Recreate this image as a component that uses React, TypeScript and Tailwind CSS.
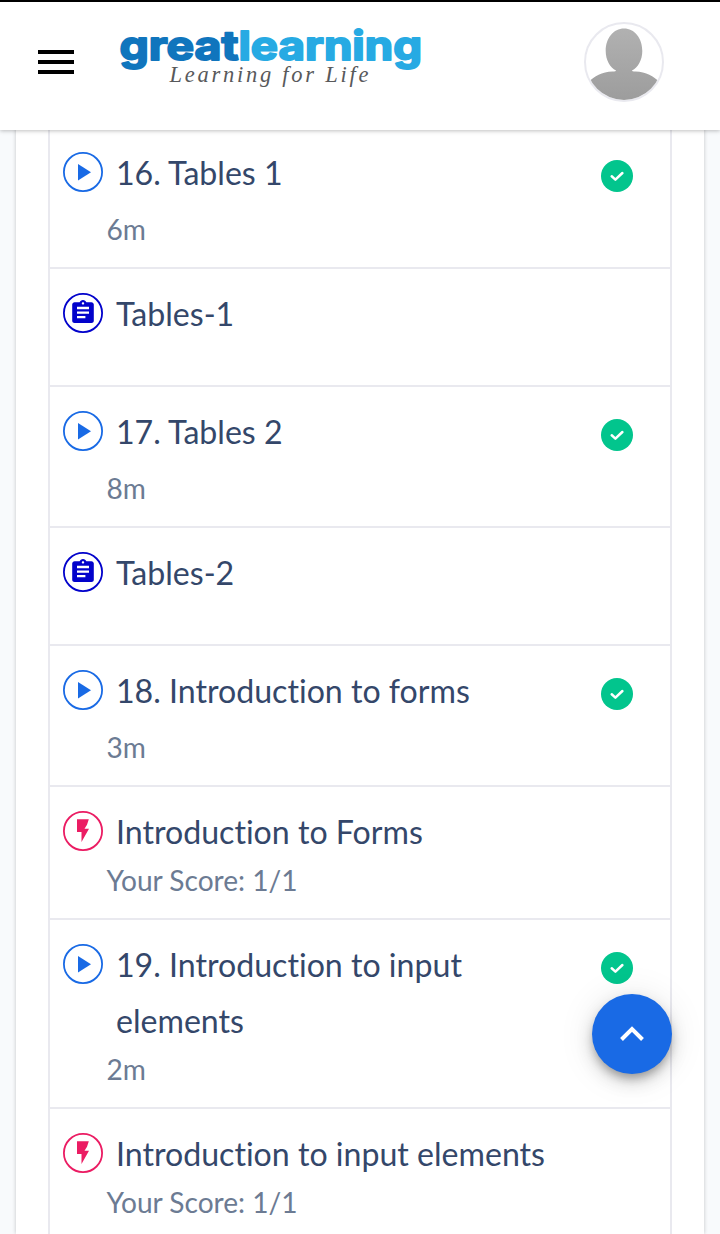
import React from "react";

type Kind = "video" | "quiz" | "exercise";

interface Lesson {
  kind: Kind;
  title: string;
  note?: string;
  done?: boolean;
  height: string;
  noteClass?: string;
}

const lessons: Lesson[] = [
  { kind: "video", title: "16. Tables 1", note: "6m", done: true, height: "h-[141px]", noteClass: "mt-2" },
  { kind: "exercise", title: "Tables-1", height: "h-[118px]" },
  { kind: "video", title: "17. Tables 2", note: "8m", done: true, height: "h-[141px]", noteClass: "mt-2" },
  { kind: "exercise", title: "Tables-2", height: "h-[118px]" },
  { kind: "video", title: "18. Introduction to forms", note: "3m", done: true, height: "h-[141px]", noteClass: "mt-2" },
  { kind: "quiz", title: "Introduction to Forms", note: "Your Score: 1/1", height: "h-[133px]" },
  { kind: "video", title: "19. Introduction to input elements", note: "2m", done: true, height: "h-[189px]" },
  { kind: "quiz", title: "Introduction to input elements", note: "Your Score: 1/1", height: "h-[133px]" },
];

function KindIcon({ kind }: { kind: Kind }) {
  if (kind === "video") {
    return (
      <svg viewBox="0 0 40 40" className="mt-6 size-10 shrink-0">
        <circle cx="20" cy="20" r="19.1" fill="none" stroke="#196ae5" strokeWidth="1.8" />
        <path d="M15 12v16.4l13-8.2z" fill="#196ae5" />
      </svg>
    );
  }
  if (kind === "exercise") {
    return (
      <svg viewBox="0 0 40 40" className="mt-6 size-10 shrink-0">
        <circle cx="20" cy="20" r="19.1" fill="none" stroke="#0202cb" strokeWidth="1.8" />
        <g transform="translate(5.6 5.8) scale(1.2 1.15)">
          <path
            fill="#0202cb"
            d="M19 3h-4.18C14.4 1.84 13.3 1 12 1c-1.3 0-2.4.84-2.82 2H5c-1.1 0-2 .9-2 2v14c0 1.1.9 2 2 2h14c1.1 0 2-.9 2-2V5c0-1.1-.9-2-2-2zm-7 0c.55 0 1 .45 1 1s-.45 1-1 1-1-.45-1-1 .45-1 1-1zm2 14H7v-2h7v2zm3-4H7v-2h10v2zm0-4H7V7h10v2z"
          />
        </g>
      </svg>
    );
  }
  return (
    <svg viewBox="0 0 40 40" className="mt-6 size-10 shrink-0">
      <circle cx="20" cy="20" r="19.1" fill="none" stroke="#eb1c63" strokeWidth="1.8" />
      <path d="M14 8.200h11.800l-1.800 5.600-2.500 4h4.500L18.500 31V21H14z" fill="#eb1c63" />
    </svg>
  );
}

function DoneBadge() {
  return (
    <svg viewBox="0 0 32 32" className="mt-8 mr-[37px] ml-auto size-8 shrink-0">
      <circle cx="16" cy="16" r="16" fill="#02c58d" />
      <path d="M10.700 16.300l3.700 3.300 7-6.600" fill="none" stroke="#fff" strokeWidth="2.5" strokeLinecap="round" strokeLinejoin="round" />
    </svg>
  );
}

function LessonRow({ lesson }: { lesson: Lesson }) {
  return (
    <li className={`flex shrink-0 items-start border-b-2 border-[#e9e9ef] pl-[13px] ${lesson.height}`}>
      <KindIcon kind={lesson.kind} />
      <div className="flex w-[450px] flex-col pt-[17px]">
        <span className="ml-[13px] w-[440px] pr-1 text-[32.12px] leading-[56px] text-[#34476a]">
          {lesson.title === "19. Introduction to input elements" ? (
            <>
              19. Introduction to input
              <br />
              elements
            </>
          ) : (
            lesson.title
          )}
        </span>
        {lesson.note && (
          <span className={`ml-[3.5px] text-[28.1px] leading-[40px] text-[#6c7b93] ${lesson.noteClass ?? ""}`}>{lesson.note}</span>
        )}
      </div>
      {lesson.done && <DoneBadge />}
    </li>
  );
}

function Logo() {
  return (
    <svg viewBox="0 0 304 64" className="ml-11 h-16 w-[304px] shrink-0 overflow-visible" aria-label="greatlearning">
      <g
        fontFamily="Inter, sans-serif"
        fontWeight="700"
        fontSize="40"
        strokeWidth="1.9"
        strokeLinejoin="round"
        strokeLinecap="round"
      >
        <text x="1.500" y="34" textLength="119" lengthAdjust="spacingAndGlyphs" fill="#1075bd" stroke="#1075bd">great</text>
        <text x="120.500" y="34" textLength="183.500" lengthAdjust="spacingAndGlyphs" fill="#27aae3" stroke="#27aae3">learning</text>
      </g>
      <text x="51.500" y="55.500" fontFamily="'Liberation Serif', serif" fontStyle="italic" fontSize="22.500" textLength="199" fill="#58595b">
        Learning for Life
      </text>
    </svg>
  );
}

function Avatar() {
  return (
    <svg viewBox="0 0 80 80" className="mr-14 ml-auto size-20 shrink-0">
      <defs>
        <linearGradient id="shade" x1="0" y1="0" x2="0" y2="80" gradientUnits="userSpaceOnUse">
          <stop offset="0" stopColor="#b3b3b3" />
          <stop offset="1" stopColor="#9c9c9c" />
        </linearGradient>
        <clipPath id="disc">
          <circle cx="40" cy="40" r="38" />
        </clipPath>
      </defs>
      <circle cx="40" cy="40" r="39" fill="#fff" stroke="#e9e9ef" strokeWidth="2" />
      <g clipPath="url(#disc)" fill="url(#shade)">
        <path d="M40 6.500c10.500 0 18.300 9.500 18.300 22.500 0 9-4.300 16.500-10.300 19.500 0 .8 1 .9 3.500 1C62 50 70 54 75 60V80H5V60C10 54 18 50 28.500 49.500c2.500-.1 3.500-.2 3.500-1-6-3-10.300-10.500-10.300-19.500C21.700 16 29.500 6.500 40 6.500z" />
      </g>
    </svg>
  );
}

export default function App() {
  return (
    <div className="relative flex h-[1234px] w-[720px] flex-col overflow-hidden bg-[#f8fafc] font-['Lato',sans-serif] [font-variant-ligatures:none]">
      <header className="z-10 flex h-[130px] shrink-0 items-start border-t-2 border-black bg-white shadow-[0_1px_4px_rgba(0,0,0,0.25)]">
        <div className="mt-12 ml-[38px] flex w-9 shrink-0 flex-col gap-1.5">
          <span className="h-1 bg-black" />
          <span className="h-1 bg-black" />
          <span className="h-1 bg-black" />
        </div>
        <div className="mt-[24px]">
          <Logo />
        </div>
        <div className="mt-5 ml-auto">
          <Avatar />
        </div>
      </header>
      <main className="-mt-0.5 mx-4 h-[1106px] shrink-0 bg-white px-8 shadow-[0_0_4px_rgba(0,0,0,0.22)]">
        <ul className="flex h-full flex-col overflow-hidden border-x-2 border-[#e9e9ef]">
          {lessons.map((lesson) => (
            <LessonRow key={lesson.title} lesson={lesson} />
          ))}
        </ul>
      </main>
      <button
        aria-label="Back to top"
        className="absolute top-[994px] left-[592px] z-20 flex size-20 items-center justify-center rounded-full bg-[#196ae5] shadow-[0_6px_10px_-2px_rgba(0,0,0,0.3),0_8px_18px_rgba(0,0,0,0.14),0_2px_36px_rgba(0,0,0,0.1)]"
      >
        <svg viewBox="0 0 24 16" className="h-4 w-6">
          <path d="M1.500 13.500L12 3l10.500 10.500" fill="none" stroke="#fff" strokeWidth="4" />
        </svg>
      </button>
    </div>
  );
}
